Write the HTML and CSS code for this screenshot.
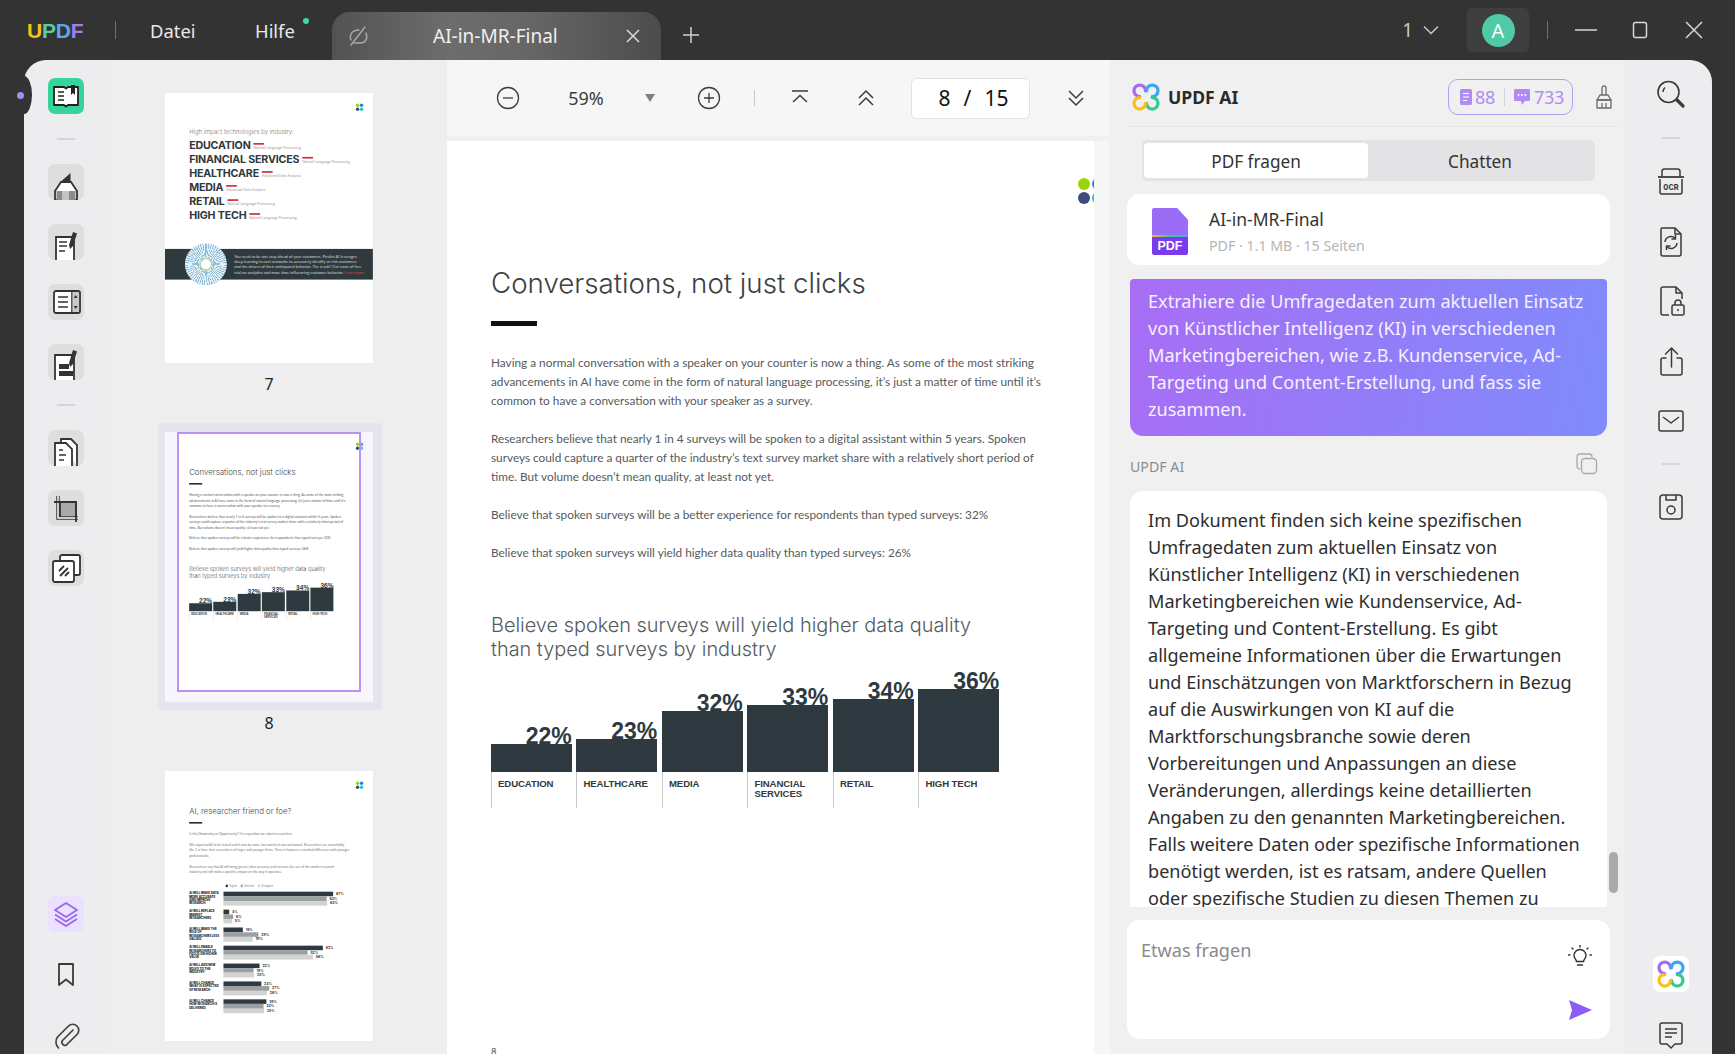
FILE: index.html
```html
<!DOCTYPE html>
<html lang="de">
<head>
<meta charset="utf-8">
<title>UPDF</title>
<link rel="stylesheet" href="styles.css">
</head>
<body>
<svg class="defs" width="0" height="0" aria-hidden="true">
  <symbol id="clover" viewBox="0 0 24 24">
    <g fill="none" stroke-width="2.6" stroke-linecap="round">
      <path stroke="#a66bf0" d="M11.6 7A4.6 4.6 0 1 0 7 11.6"/>
      <path stroke="#3aa6f5" d="M12.4 7A4.6 4.6 0 1 1 17 11.6"/>
      <path stroke="#35c98f" d="M17 12.4A4.6 4.6 0 1 1 12.4 17"/>
      <path stroke="#f9bf1a" d="M7 12.4A4.6 4.6 0 1 0 11.6 17"/>
    </g>
  </symbol>
</svg>
<div class="app">
  <header class="titlebar">
    <div class="brand"><span class="c-u">U</span><span class="c-p">P</span><span class="c-d">D</span><span class="c-f">F</span></div>
    <span class="tsep"></span>
    <span class="menu menu-datei">Datei</span>
    <span class="menu menu-hilfe">Hilfe<i class="hilfe-dot"></i></span>
    <div class="tab">
      <svg class="tab-ic" viewBox="0 0 24 24" fill="none" stroke="#a8a8a8" stroke-width="1.5" stroke-linecap="round"><path d="M5 21 19 3"/><path d="M5 16c-2-5 1-10 8-10"/><path d="M20 9c2 5 0 10-6 10H8"/></svg>
      <span class="tab-title">AI-in-MR-Final</span>
      <svg class="tab-x" viewBox="0 0 14 14" stroke="#dcdcdc" stroke-width="1.5"><path d="M1 1l12 12M13 1 1 13"/></svg>
    </div>
    <svg class="tab-plus" viewBox="0 0 18 18" stroke="#cfcfcf" stroke-width="1.5"><path d="M9 1v16M1 9h16"/></svg>
    <div class="tright">
      <span class="tcount">1</span>
      <svg class="tchev" viewBox="0 0 16 10" fill="none" stroke="#c8c8c8" stroke-width="1.5"><path d="M1 1.500 8 8.500 15 1.500"/></svg>
      <div class="avatar-box"><span class="avatar">A</span></div>
      <span class="tsep2"></span>
      <span class="winbtn"><svg viewBox="0 0 22 22" stroke="#d8d8d8" stroke-width="1.5"><path d="M0 11h22"/></svg></span>
      <span class="winbtn"><svg viewBox="0 0 22 22" fill="none" stroke="#d8d8d8" stroke-width="1.5"><rect x="4.500" y="3.500" width="13" height="15" rx="2"/></svg></span>
      <span class="winbtn"><svg viewBox="0 0 22 22" stroke="#d8d8d8" stroke-width="1.5"><path d="M3 3l16 16M19 3 3 19"/></svg></span>
    </div>
  </header>

  <main class="main">
    <div class="notch"><i class="notch-dot"></i></div>

    <nav class="rail rail-left">
      <span class="tile tile-on">
        <svg viewBox="0 0 36 36"><path d="M6 9h10l2 1.500L20 9h10v18H20l-2 1.500L16 27H6z" fill="#fff" stroke="#222" stroke-width="1.800" stroke-linejoin="round"/><path d="M10 14h6M10 18h6M10 22h6" stroke="#222" stroke-width="1.600"/><path d="M23 7h4v10l-2-2-2 2z" fill="#222"/></svg>
      </span>
      <span class="dash"></span>
      <span class="tile">
        <svg viewBox="0 0 36 36"><path d="M13.500 17 22.500 9v8z" fill="#333"/><path d="M13 18h10l6 9v9H7v-9z" fill="#fff" stroke="#333" stroke-width="1.800"/><rect x="8.500" y="27" width="19" height="9" fill="#8b8b8b"/><rect x="14" y="27" width="7" height="9" fill="#c4c4c4"/></svg>
      </span>
      <span class="tile">
        <svg viewBox="0 0 36 36"><path d="M8 36V13h18v23" fill="#fff" stroke="#333" stroke-width="1.800"/><path d="M11 18h8M11 22h8M11 27h6" stroke="#333" stroke-width="1.600"/><path d="M25 8l4 1.500-4 12.500-3 3-1-4z" fill="#333"/></svg>
      </span>
      <span class="tile">
        <svg viewBox="0 0 36 36"><rect x="6" y="7" width="26" height="22" rx="2" fill="#fff" stroke="#333" stroke-width="1.800"/><path d="M24 7v22" stroke="#333" stroke-width="1.600"/><rect x="24.500" y="8" width="6.500" height="20" fill="#c9c9c9"/><path d="M10 13h10M10 18h10M10 23h10" stroke="#333" stroke-width="1.700"/><path d="M27.700 11l-2 3h4zM27.700 25l-2-3h4z" fill="#333"/></svg>
      </span>
      <span class="tile">
        <svg viewBox="0 0 36 36"><path d="M7 36V11h19v25" fill="#fff" stroke="#333" stroke-width="1.800"/><rect x="11" y="20" width="10" height="5" fill="#333"/><rect x="11" y="27" width="14" height="5" fill="#333"/><path d="M25 6l4 1.500-4 12.500-3 3-1-4z" fill="#333"/></svg>
      </span>
      <span class="dash"></span>
      <span class="tile">
        <svg viewBox="0 0 36 36"><path d="M13 12V9h10l6 6v21" fill="#fff" stroke="#333" stroke-width="1.800"/><path d="M7 36V13h11l6 6v17" fill="#fff" stroke="#333" stroke-width="1.800"/><path d="M11 20h4M11 25h7M11 30h5" stroke="#333" stroke-width="1.600"/></svg>
      </span>
      <span class="tile">
        <svg viewBox="0 0 36 36" fill="none" stroke="#333" stroke-width="1.800"><rect x="12" y="12" width="16" height="16" fill="#a9a9a9"/><path d="M10 6v22h20" stroke-width="3.500" stroke="#333"/><path d="M10 6v22h20" stroke-width="1.500" stroke="#fff"/><path d="M6 12h22v20" /></svg>
      </span>
      <span class="tile">
        <svg viewBox="0 0 36 36"><rect x="12" y="5" width="20" height="20" rx="2" fill="#fff" stroke="#333" stroke-width="1.800"/><rect x="5" y="11" width="21" height="21" rx="2" fill="#fff" stroke="#333" stroke-width="1.800"/><path d="M11 21l5-5M12 26l8-8M17 26l4-4" stroke="#333" stroke-width="1.800"/></svg>
      </span>
      <span class="rail-spacer"></span>
      <span class="tile tile-lilac">
        <svg viewBox="0 0 36 36" fill="none" stroke="#9a68ec" stroke-width="1.800" stroke-linejoin="round"><path d="M18 7l11 7-11 7-11-7z"/><path d="M7 18.500l11 7 11-7M7 23l11 7 11-7"/></svg>
      </span>
      <span class="tile tile-plain">
        <svg viewBox="0 0 36 36" fill="none" stroke="#3a3a3a" stroke-width="1.800" stroke-linejoin="round"><path d="M11 8h14v21l-7-5.500L11 29z"/></svg>
      </span>
      <span class="tile tile-plain">
        <svg viewBox="0 0 36 36" fill="none" stroke="#444" stroke-width="1.700" stroke-linecap="round"><path d="M25 14 14.500 24.500a3 3 0 0 0 4.200 4.200L29 18.500a6 6 0 0 0-8.500-8.500L9.500 21a8.500 8.500 0 0 0 1 11"/></svg>
      </span>
    </nav>

    <aside class="thumbs">
      <div class="thumb">
        <div class="thumb-page">
          <article class="doc doc-mini">
            <div class="doc-logo"><i class="d1"></i><i class="d2"></i><i class="d3"></i><i class="d4"></i></div>
            <p class="lead">High impact technologies by industry:</p>
            <div class="ind"><b>EDUCATION</b><span class="tag"><i></i>Natural Language Processing</span></div>
            <div class="ind"><b>FINANCIAL SERVICES</b><span class="tag"><i></i>Natural Language Processing</span></div>
            <div class="ind"><b>HEALTHCARE</b><span class="tag"><i></i>Advanced Data Analysis</span></div>
            <div class="ind"><b>MEDIA</b><span class="tag"><i></i>Advanced Data Analysis</span></div>
            <div class="ind"><b>RETAIL</b><span class="tag"><i></i>Natural Language Processing</span></div>
            <div class="ind"><b>HIGH TECH</b><span class="tag"><i></i>Natural Language Processing</span></div>
            <div class="band">
              <span class="burst"></span>
              <p>You need to be one step ahead of your customers. Predict AI leverages<br>deep learning/neural networks to accurately identify at-risk customers<br>and the drivers of their anticipated behavior. The result? Cut costs of free<br>trial on analytics and more time influencing customer behavior. <em>Learn more</em></p>
            </div>
          </article>
        </div>
        <div class="thumb-no">7</div>
      </div>

      <div class="thumb thumb-sel">
        <div class="thumb-page">
          <article class="doc doc-mini">
            <div class="doc-logo"><i class="d1"></i><i class="d2"></i><i class="d3"></i><i class="d4"></i></div>
            <h1 class="doc-title">Conversations, not just clicks</h1>
            <div class="doc-bar"></div>
            <p class="doc-p">Having a normal conversation with a speaker on your counter is now a thing. As some of the most striking<br>advancements in AI have come in the form of natural language processing, it’s just a matter of time until it’s<br>common to have a conversation with your speaker as a survey.</p>
            <p class="doc-p">Researchers believe that nearly 1 in 4 surveys will be spoken to a digital assistant within 5 years. Spoken<br>surveys could capture a quarter of the industry’s text survey market share with a relatively short period of<br>time. But volume doesn’t mean quality, at least not yet.</p>
            <p class="doc-p">Believe that spoken surveys will be a better experience for respondents than typed surveys: 32%</p>
            <p class="doc-p">Believe that spoken surveys will yield higher data quality than typed surveys: 26%</p>
            <h2 class="doc-h2">Believe spoken surveys will yield higher data quality<br>than typed surveys by industry</h2>
            <div class="cols">
              <div class="col"><span class="pct">22%</span><span class="colbar" style="height:28px"></span><span class="collab">EDUCATION</span></div>
              <div class="col"><span class="pct">23%</span><span class="colbar" style="height:33px"></span><span class="collab">HEALTHCARE</span></div>
              <div class="col"><span class="pct">32%</span><span class="colbar" style="height:61px"></span><span class="collab">MEDIA</span></div>
              <div class="col"><span class="pct">33%</span><span class="colbar" style="height:67px"></span><span class="collab">FINANCIAL<br>SERVICES</span></div>
              <div class="col"><span class="pct">34%</span><span class="colbar" style="height:73px"></span><span class="collab">RETAIL</span></div>
              <div class="col"><span class="pct">36%</span><span class="colbar" style="height:83px"></span><span class="collab">HIGH TECH</span></div>
            </div>
          </article>
          <div class="sel-frame"></div>
        </div>
        <div class="thumb-no">8</div>
      </div>

      <div class="thumb">
        <div class="thumb-page">
          <article class="doc doc-mini">
            <div class="doc-logo"><i class="d1"></i><i class="d2"></i><i class="d3"></i><i class="d4"></i></div>
            <h1 class="doc-title">AI, researcher friend or foe?</h1>
            <div class="doc-bar"></div>
            <p class="doc-p doc-p-soft">Is this Doomsday or Opportunity? It’s a question we asked researchers.</p>
            <p class="doc-p doc-p-soft">We expected AI to be feared and it was by some, but mostly it was welcomed. Researchers are remarkably<br>like 1 in four, that researchers of larger and younger firms. There is however a marked difference with younger<br>professionals.</p>
            <p class="doc-p doc-p-soft">Researchers say that AI will bring greater data accuracy and increase the use of the market research<br>industry and will make a positive impact on the way it operates.</p>
            <div class="hchart">
              <div class="legend"><i class="k1"></i>Agree <i class="k2"></i>Neutral <i class="k3"></i>Disagree</div>
              <div class="hrow"><span class="hlab">AI WILL MAKE DATA MORE ACCURATE AND IMPROVE RESEARCH</span><div class="hbars"><div class="hb k1" style="width:386px"><u>67%</u></div><div class="hb k2" style="width:363px"><u>63%</u></div><div class="hb k3" style="width:365px"><u>63%</u></div></div></div>
              <div class="hrow"><span class="hlab">AI WILL REPLACE MARKET RESEARCHERS</span><div class="hbars"><div class="hb k1" style="width:20px"><u>4%</u></div><div class="hb k2" style="width:34px"><u>6%</u></div><div class="hb k3" style="width:30px"><u>5%</u></div></div></div>
              <div class="hrow hrow-l"><span class="hlab">AI WILL MAKE THE ROLE OF RESEARCHERS LESS VALUED</span><div class="hbars"><div class="hb k1" style="width:68px"><u>16%</u></div><div class="hb k2" style="width:123px"><u>28%</u></div><div class="hb k3" style="width:103px"><u>19%</u></div></div></div>
              <div class="hrow"><span class="hlab">AI WILL ENABLE RESEARCHERS TO FOCUS ON HIGHER VALUE</span><div class="hbars"><div class="hb k1" style="width:350px"><u>62%</u></div><div class="hb k2" style="width:296px"><u>52%</u></div><div class="hb k3" style="width:315px"><u>56%</u></div></div></div>
              <div class="hrow hrow-l"><span class="hlab">AI WILL ADD NEW ROLES TO THE INDUSTRY</span><div class="hbars"><div class="hb k1" style="width:127px"><u>22%</u></div><div class="hb k2" style="width:106px"><u>18%</u></div><div class="hb k3" style="width:108px"><u>20%</u></div></div></div>
              <div class="hrow"><span class="hlab">AI WILL CHANGE WHAT IS EXPECTED OF RESEARCH</span><div class="hbars"><div class="hb k1" style="width:133px"><u>24%</u></div><div class="hb k2" style="width:161px"><u>27%</u></div><div class="hb k3" style="width:153px"><u>26%</u></div></div></div>
              <div class="hrow"><span class="hlab">AI WILL CHANGE HOW RESEARCH IS DELIVERED</span><div class="hbars"><div class="hb k1" style="width:151px"><u>28%</u></div><div class="hb k2" style="width:141px"><u>24%</u></div><div class="hb k3" style="width:143px"><u>25%</u></div></div></div>
            </div>
          </article>
        </div>
      </div>
    </aside>

    <section class="viewer">
      <div class="toolbar">
        <svg class="tb-ic" viewBox="0 0 24 24" fill="none" stroke="#3c3c3c" stroke-width="1.300"><circle cx="12" cy="12" r="10.500"/><path d="M7 12h10"/></svg>
        <span class="zoom-val">59%</span>
        <svg class="tb-tri" viewBox="0 0 10 8" fill="#808080"><path d="M0 0h10L5 8z"/></svg>
        <svg class="tb-ic" viewBox="0 0 24 24" fill="none" stroke="#3c3c3c" stroke-width="1.300"><circle cx="12" cy="12" r="10.500"/><path d="M7 12h10M12 7v10"/></svg>
        <span class="tb-sep"></span>
        <svg class="tb-ic-s" viewBox="0 0 20 20" fill="none" stroke="#3c3c3c" stroke-width="1.500"><path d="M2 3h16M3 14l7-6.500 7 6.500"/></svg>
        <svg class="tb-ic-s" viewBox="0 0 20 20" fill="none" stroke="#3c3c3c" stroke-width="1.500"><path d="M3 10l7-7 7 7M3 17l7-7 7 7"/></svg>
        <div class="pagebox"><span>8</span><span>/</span><span>15</span></div>
        <svg class="tb-ic-s" viewBox="0 0 20 20" fill="none" stroke="#3c3c3c" stroke-width="1.500"><path d="M3 3l7 7 7-7M3 10l7 7 7-7"/></svg>
      </div>
      <div class="page-area">
        <div class="page-clip">
          <article class="doc">
            <div class="doc-logo"><i class="d1"></i><i class="d2"></i><i class="d3"></i><i class="d4"></i></div>
            <h1 class="doc-title">Conversations, not just clicks</h1>
            <div class="doc-bar"></div>
            <p class="doc-p">Having a normal conversation with a speaker on your counter is now a thing. As some of the most striking<br>advancements in AI have come in the form of natural language processing, it’s just a matter of time until it’s<br>common to have a conversation with your speaker as a survey.</p>
            <p class="doc-p">Researchers believe that nearly 1 in 4 surveys will be spoken to a digital assistant within 5 years. Spoken<br>surveys could capture a quarter of the industry’s text survey market share with a relatively short period of<br>time. But volume doesn’t mean quality, at least not yet.</p>
            <p class="doc-p">Believe that spoken surveys will be a better experience for respondents than typed surveys: 32%</p>
            <p class="doc-p">Believe that spoken surveys will yield higher data quality than typed surveys: 26%</p>
            <h2 class="doc-h2">Believe spoken surveys will yield higher data quality<br>than typed surveys by industry</h2>
            <div class="cols">
              <div class="col"><span class="pct">22%</span><span class="colbar" style="height:28px"></span><span class="collab">EDUCATION</span></div>
              <div class="col"><span class="pct">23%</span><span class="colbar" style="height:33px"></span><span class="collab">HEALTHCARE</span></div>
              <div class="col"><span class="pct">32%</span><span class="colbar" style="height:61px"></span><span class="collab">MEDIA</span></div>
              <div class="col"><span class="pct">33%</span><span class="colbar" style="height:67px"></span><span class="collab">FINANCIAL<br>SERVICES</span></div>
              <div class="col"><span class="pct">34%</span><span class="colbar" style="height:73px"></span><span class="collab">RETAIL</span></div>
              <div class="col"><span class="pct">36%</span><span class="colbar" style="height:83px"></span><span class="collab">HIGH TECH</span></div>
            </div>
            <div class="doc-no">8</div>
          </article>
        </div>
      </div>
    </section>

    <section class="ai">
      <div class="ai-head">
        <svg class="ai-logo"><use href="#clover"/></svg>
        <strong class="ai-name">UPDF AI</strong>
        <div class="quota">
          <svg class="q-ic" viewBox="0 0 12 16"><path d="M1.500 0h9A1.500 1.500 0 0 1 12 1.500v13a1.500 1.500 0 0 1-1.500 1.500h-9A1.500 1.500 0 0 1 0 14.500v-13A1.500 1.500 0 0 1 1.500 0z" fill="#b18cf3"/><path d="M3 4.500h6M3 8h6M3 11.500h4" stroke="#fff" stroke-width="1.200"/></svg>
          <span>88</span>
          <i class="q-sep"></i>
          <svg class="q-ic2" viewBox="0 0 16 16"><path d="M1 0h14a1 1 0 0 1 1 1v10a1 1 0 0 1-1 1h-4l-3 4-1-4H1a1 1 0 0 1-1-1V1a1 1 0 0 1 1-1z" fill="#b18cf3"/><circle cx="4.500" cy="6" r="1" fill="#fff"/><circle cx="8" cy="6" r="1" fill="#fff"/><circle cx="11.500" cy="6" r="1" fill="#fff"/></svg>
          <span>733</span>
        </div>
        <svg class="broom" viewBox="0 0 18 24" fill="none" stroke="#6c6c6c" stroke-width="1.300" stroke-linejoin="round"><path d="M7 10V3a2 2 0 0 1 4 0v7"/><path d="M5 10h8l3 5H2z"/><path d="M2 15h14v8H2zM7 18v5M11 18v5"/></svg>
      </div>
      <div class="ai-tabs">
        <span class="ai-tab ai-tab-on">PDF fragen</span>
        <span class="ai-tab">Chatten</span>
      </div>
      <div class="file-card">
        <div class="file-ic"><span class="file-top"></span><span class="file-strip"></span><span class="file-bot">PDF</span></div>
        <div class="file-meta">
          <div class="file-name">AI-in-MR-Final</div>
          <div class="file-sub">PDF · 1.1 MB · 15 Seiten</div>
        </div>
      </div>
      <div class="chat">
        <div class="bubble">Extrahiere die Umfragedaten zum aktuellen Einsatz<br>von Künstlicher Intelligenz (KI) in verschiedenen<br>Marketingbereichen, wie z.B. Kundenservice, Ad-<br>Targeting und Content-Erstellung, und fass sie<br>zusammen.</div>
        <div class="ans-head">
          <span>UPDF AI</span>
          <svg class="copy" viewBox="0 0 22 22" fill="none" stroke="#a8a8a8" stroke-width="1.300"><rect x="5.500" y="5.500" width="15" height="15" rx="3.500"/><path d="M4 16a3 3 0 0 1-3-3V4a3 3 0 0 1 3-3h9a3 3 0 0 1 3 3"/></svg>
        </div>
        <div class="answer">Im Dokument finden sich keine spezifischen<br>Umfragedaten zum aktuellen Einsatz von<br>Künstlicher Intelligenz (KI) in verschiedenen<br>Marketingbereichen wie Kundenservice, Ad-<br>Targeting und Content-Erstellung. Es gibt<br>allgemeine Informationen über die Erwartungen<br>und Einschätzungen von Marktforschern in Bezug<br>auf die Auswirkungen von KI auf die<br>Marktforschungsbranche sowie deren<br>Vorbereitungen und Anpassungen an diese<br>Veränderungen, allerdings keine detaillierten<br>Angaben zu den genannten Marketingbereichen.<br>Falls weitere Daten oder spezifische Informationen<br>benötigt werden, ist es ratsam, andere Quellen<br>oder spezifische Studien zu diesen Themen zu</div>
        <span class="scroll-thumb"></span>
      </div>
      <div class="ask">
        <div class="ask-top">
          <span class="ask-ph">Etwas fragen</span>
          <svg class="bulb" viewBox="0 0 24 24" fill="none" stroke="#333" stroke-width="1.400" stroke-linecap="round"><path d="M8.500 16.500c0-2-2.500-3-2.500-6a6 6 0 0 1 12 0c0 3-2.500 4-2.500 6z"/><path d="M9.500 20h5M12 0.500v1.500M2 10H.5M23.500 10H22M4 3l1 1M20 3l-1 1"/></svg>
        </div>
        <svg class="send" viewBox="0 0 24 20" fill="#8b5cf6"><path d="M1 0l23 10L1 20l3-10z"/></svg>
      </div>
    </section>

    <nav class="rail rail-right">
      <svg class="rico" viewBox="0 0 36 36" fill="none" stroke="#3a3a3a" stroke-width="1.600"><circle cx="15.500" cy="15" r="10.500"/><path d="M10 15a6 6 0 0 1 2-4.500"/><path d="M24 23l6 6" stroke-width="3.200" stroke-linecap="round"/></svg>
      <span class="dash"></span>
      <svg class="rico" viewBox="0 0 36 36" fill="none" stroke="#3a3a3a" stroke-width="1.500"><path d="M9 13V8.500A2.500 2.500 0 0 1 11.500 6h13A2.500 2.500 0 0 1 27 8.500V13"/><path d="M5 14h26" stroke-width="1.800"/><path d="M7 16v13a2 2 0 0 0 2 2h18a2 2 0 0 0 2-2V16"/><text x="18" y="27" class="ocr-t">OCR</text></svg>
      <svg class="rico" viewBox="0 0 36 36" fill="none" stroke="#3a3a3a" stroke-width="1.500" stroke-linejoin="round"><path d="M9 5h13l6 6v20a2 2 0 0 1-2 2H10a2 2 0 0 1-2-2V6a1 1 0 0 1 1-1z"/><path d="M22 5v6h6"/><path d="M12 19a6 6 0 0 1 10-4M24 20a6 6 0 0 1-10 4"/><path d="M22.500 12v4h-4M13.500 27v-4h4" stroke-width="1.500"/></svg>
      <svg class="rico" viewBox="0 0 36 36" fill="none" stroke="#3a3a3a" stroke-width="1.500" stroke-linejoin="round"><path d="M16 32H10a2 2 0 0 1-2-2V6a2 2 0 0 1 2-2h13l6 6v6"/><path d="M23 4v6h6"/><rect x="19" y="22" width="12" height="10" rx="1.500"/><path d="M22 22v-2a3 3 0 0 1 6 0v2M25 26v2"/></svg>
      <svg class="rico" viewBox="0 0 36 36" fill="none" stroke="#3a3a3a" stroke-width="1.500" stroke-linejoin="round" stroke-linecap="round"><path d="M13 15H10a2 2 0 0 0-2 2v13a2 2 0 0 0 2 2h17a2 2 0 0 0 2-2V17a2 2 0 0 0-2-2h-3"/><path d="M18.500 24V5M12.500 11l6-6 6 6"/></svg>
      <svg class="rico" viewBox="0 0 36 36" fill="none" stroke="#3a3a3a" stroke-width="1.500" stroke-linejoin="round"><rect x="6" y="8" width="24" height="20" rx="2"/><path d="M10 14l8 6 8-6"/></svg>
      <span class="dash"></span>
      <svg class="rico" viewBox="0 0 36 36" fill="none" stroke="#3a3a3a" stroke-width="1.500" stroke-linejoin="round"><path d="M10 6h16a3 3 0 0 1 3 3v18a3 3 0 0 1-3 3H10a3 3 0 0 1-3-3V9a3 3 0 0 1 3-3z"/><path d="M13 6v5h10V6"/><circle cx="18" cy="21" r="4"/></svg>
      <span class="rail-spacer"></span>
      <span class="tile tile-white"><svg class="tile-clover"><use href="#clover"/></svg></span>
      <svg class="rico" viewBox="0 0 36 36" fill="none" stroke="#3a3a3a" stroke-width="1.500" stroke-linejoin="round"><path d="M9 7h18a2 2 0 0 1 2 2v17a2 2 0 0 1-2 2h-5l-4 4-4-4H9a2 2 0 0 1-2-2V9a2 2 0 0 1 2-2z"/><path d="M12 13h12M12 17h12M12 21h7"/></svg>
    </nav>
  </main>
</div>
</body>
</html>
```

FILE: styles.css
```css
* { box-sizing: border-box; }
html, body { margin: 0; padding: 0; height: 100%; }
body { background: #333333; font-family: "Noto Sans", "Liberation Sans", sans-serif; overflow: hidden; color: #333; }
.defs { display: block; height: 0; }
.app { width: 1735px; height: 1054px; display: flex; flex-direction: column; }

/* title bar */
.titlebar { height: 60px; flex: none; display: flex; align-items: center; padding-left: 27px; color: #ececec; }
.brand { width: 56px; font: 700 21px/1 "Liberation Sans", sans-serif; letter-spacing: -.2px; }
.c-u { color: #f7c21c; } .c-p { color: #55cfa0; } .c-d { color: #5aa9ef; } .c-f { color: #a97cf0; }
.tsep { width: 1px; height: 18px; background: #707070; margin-left: 32px; margin-right: 34px; }
.menu { font-size: 18.400px; color: #e8e8e8; position: relative; }
.menu-datei { width: 105px; }
.menu-hilfe { width: 77px; }
.hilfe-dot { position: absolute; left: 48px; top: 0; width: 6px; height: 6px; border-radius: 50%; background: #3fd6a2; }
.tab { align-self: flex-end; width: 329px; height: 48px; display: flex; align-items: center; border-radius: 18px 18px 0 0; background: linear-gradient(90deg, #525252, #6d6d6d 35%, #666 60%, #4c4c4c); }
.tab-ic { width: 24px; height: 24px; margin-left: 14px; flex: none; }
.tab-title { margin-left: 63px; width: 200px; font-size: 19px; color: #f0f0f0; }
.tab-x { width: 14px; height: 14px; margin-left: -7px; }
.tab-plus { width: 18px; height: 18px; margin: 10px 0 0 21px; }
.tright { margin-left: auto; display: flex; align-items: center; margin-right: 14px; }
.tcount { font-size: 19px; color: #c8c8c8; margin-right: 10px; }
.tchev { width: 16px; height: 10px; margin-right: 28px; }
.avatar-box { width: 62px; height: 44px; background: #3e3e3e; border-radius: 5px; display: flex; align-items: center; justify-content: center; margin-right: 18px; }
.avatar { width: 33px; height: 33px; border-radius: 50%; background: #4fc9a6; color: #fff; font-size: 20px; line-height: 33px; text-align: center; }
.tsep2 { width: 1px; height: 18px; background: #707070; margin-right: 11px; }
.winbtn { width: 54px; display: flex; justify-content: center; }
.winbtn svg { width: 22px; height: 22px; }

/* main shell */
.main { flex: 1; min-height: 0; margin: 0 23px 0 24px; display: flex; position: relative; background: #ededef; border-radius: 22px 22px 0 0; }
.notch { position: absolute; left: -8px; top: 16px; width: 16px; height: 38px; border-radius: 50%; background: #333; }
.notch-dot { position: absolute; left: 1px; top: 16px; width: 7px; height: 7px; border-radius: 50%; background: #a98af0; }

/* rails */
.rail { flex: none; display: flex; flex-direction: column; align-items: center; gap: 24px; padding: 18px 0 2px; }
.rail-left { width: 83px; }
.rail-right { width: 87px; padding-top: 17px; padding-left: 4px; }
.rail-spacer { flex: 1; }
.tile { width: 36px; height: 36px; flex: none; border-radius: 7px; background: #dededf; overflow: hidden; display: block; }
.tile svg { display: block; width: 36px; height: 36px; }
.tile-on { background: #35d49a; }
.tile-lilac { background: #ebe0fd; }
.tile-plain { background: transparent; }
.tile-white { background: #fff; padding: 3px; }
.tile .tile-clover { width: 30px; height: 30px; }
.dash { width: 18px; height: 2px; flex: none; background: #d5d5d7; }
.rico { width: 36px; height: 36px; flex: none; }
.ocr-t { font: 700 8.500px "Liberation Mono", monospace; text-anchor: middle; fill: #3a3a3a; stroke: none; }

/* thumbnails */
.thumbs { width: 340px; flex: none; overflow: hidden; padding: 33px 0 0 58px; background: #eeeeef; }
.thumb { width: 208px; height: 339px; flex: none; }
.thumb-page { width: 208px; height: 270px; background: #fff; position: relative; overflow: hidden; }
.thumb-no { margin-top: 10px; text-align: center; font-size: 16px; line-height: 22px; color: #222; }
.thumb-sel .thumb-page { overflow: hidden; background: #f5f1fd; }
.thumb-sel { position: relative; }
.thumb-sel::before { content: ""; position: absolute; left: -7px; top: -9px; width: 224px; height: 287px; background: #e6e4ef; border-radius: 3px; }
.sel-frame { position: absolute; left: 12px; top: 0; width: 184px; height: 260px; border: 2px solid #b794f4; box-shadow: 0 0 0 40px rgba(232, 222, 250, .3); }

/* document */
.doc { width: 732px; height: 950px; background: #fff; padding: 37px 0 0 85px; font-family: "Inter", "Liberation Sans", sans-serif; color: #4a4f52; position: relative; flex: none; }
.doc-mini { transform: scale(.284); transform-origin: 0 0; }
.doc-logo { margin-left: 587px; width: 26px; display: grid; grid-template-columns: 12px 12px; gap: 2px; height: 26px; }
.doc-logo i { width: 12px; height: 12px; border-radius: 50%; display: block; }
.d1 { background: #9bd40f; } .d2 { background: #1c88d8; } .d3 { background: #3f4a7e; } .d4 { background: #25c3cf; }
.doc-title { margin: 59px 0 18px; font-size: 27.700px; line-height: 40px; font-weight: 300; color: #3c4144; }
.doc-bar { width: 46px; height: 5px; background: #111; margin-bottom: 27px; }
.doc-p { margin: 0 0 19px; font-family: "Lato", "Liberation Sans", sans-serif; font-size: 11.800px; line-height: 19px; color: #555a5d; white-space: nowrap; }
.doc-p-soft { color: #777; }
.doc-h2 { margin: 51px 0 6px; font-size: 19.900px; line-height: 24px; font-weight: 300; color: #555a5d; white-space: nowrap; }
.cols { display: flex; gap: 4.700px; align-items: flex-end; height: 141px; }
.col { width: 80.800px; display: flex; flex-direction: column; align-items: flex-end; }
.pct { font: 700 23px/24px "Liberation Sans", sans-serif; color: #2e3a3f; margin-bottom: -4px; }
.colbar { display: block; width: 100%; background: #2e3a3f; position: relative; }
.collab { width: 100%; height: 36px; border-left: 1px solid #c6c8ca; padding: 7px 0 0 6px; font: 700 9.600px/10px "Liberation Sans", sans-serif; letter-spacing: -.1px; color: #333a3e; }
.doc-no { font-size: 9px; color: #555; margin-top: 238px; }

/* thumb 7 */
.lead { margin: 60px 0 5px; font-size: 21px; line-height: 30px; font-weight: 300; color: #777; }
.ind { display: flex; align-items: center; gap: 10px; height: 49.500px; white-space: nowrap; }
.ind b { font-size: 37.500px; font-weight: 700; color: #30383c; letter-spacing: -.6px; }
.tag { display: flex; flex-direction: column; font-size: 12px; color: #999; padding-top: 10px; }
.tag i { width: 38px; height: 6px; background: #d32f3d; margin-bottom: 3px; }
.band { margin: 94px 0 0 -85px; height: 108px; width: 732px; background: #2f3a3f; display: flex; align-items: center; padding-left: 70px; }
.burst { width: 148px; height: 148px; flex: none; border-radius: 50%; background: radial-gradient(circle, #fff 0 16%, #b8d8b0 17%, transparent 28%), repeating-conic-gradient(#8fc0dc 0 3deg, #e6f0f6 3deg 7deg); }
.band p { margin: 0 0 0 26px; font-family: "Lato", "Liberation Sans", sans-serif; font-size: 14px; line-height: 18.500px; color: #d4d8da; white-space: nowrap; }
.band em { font-style: normal; color: #e23a48; }

/* thumb 9 */
.hchart { margin-top: 31px; }
.legend { margin-left: 120px; height: 18px; font-size: 10px; color: #888; display: flex; align-items: center; gap: 4px; margin-bottom: 12px; }
.legend i { width: 9px; height: 9px; border-radius: 50%; margin-left: 8px; }
.hrow { display: flex; margin-bottom: 14px; }
.hrow-l { margin-top: 14px; }
.hlab { width: 120px; padding-right: 12px; flex: none; font-size: 10.500px; line-height: 12px; font-weight: 800; color: #222; }
.hbars { border-left: 1px solid #ddd; }
.hb { height: 16.400px; position: relative; }
.hb u { position: absolute; left: 100%; margin-left: 10px; top: 0; text-decoration: none; font-size: 12px; line-height: 16px; font-weight: 700; color: #333; }
.k1 { background: #2e3a3f; } .k2 { background: #9aa0a2; } .k3 { background: #d2d4d4; }

/* viewer */
.viewer { width: 663px; flex: none; display: flex; flex-direction: column; background: #f6f6f7; min-height: 0; }
.toolbar { height: 81px; flex: none; display: grid; grid-template-columns: 60px 96px 32px 86px 4px 88px 44px 154px 68px; align-items: center; justify-items: center; padding: 0 0 0 31px; border-bottom: 5px solid #f0f0f1; }
.tb-ic { width: 24px; height: 24px; }
.tb-ic-s { width: 20px; height: 20px; }
.tb-tri { width: 10px; height: 8px; }
.zoom-val { font-size: 18px; color: #3c3c3c; }
.tb-sep { width: 1px; height: 16px; background: #c8c8ca; }
.pagebox { justify-self: start; margin-left: 23px; width: 119px; height: 41px; background: #fff; border: 1px solid #e2e2e4; border-radius: 5px; display: flex; align-items: center; justify-content: center; gap: 13px; font-size: 21px; color: #111; padding-left: 6px; }
.page-area { flex: 1; min-height: 0; overflow: hidden; }
.page-clip { width: 647px; height: 100%; overflow: hidden; background: #fff; }
.page-clip .doc { margin-left: -41px; height: 925px; }

/* AI panel */
.ai { width: 515px; flex: none; display: flex; flex-direction: column; min-height: 0; background: #f0f0f1; }
.ai-head { height: 67px; flex: none; margin: 0 5px 0 18px; display: flex; align-items: center; border-bottom: 1px solid #e7e7e8; padding-top: 7px; }
.ai-logo { width: 30px; height: 30px; margin-left: 3px; flex: none; }
.ai-name { margin-left: 7px; width: 280px; font-size: 17.600px; color: #2a2a2a; }
.quota { width: 125px; height: 36px; border: 1.500px solid #b99df2; border-radius: 10px; display: flex; align-items: center; padding-left: 11px; color: #b18cf3; font-size: 18px; letter-spacing: -.3px; }
.q-ic { width: 12px; height: 16px; margin-right: 3px; }
.q-ic2 { width: 16px; height: 16px; margin-right: 4px; }
.q-sep { width: 1px; height: 18px; background: #d5d0e6; margin: 0 9px; }
.broom { width: 18px; height: 24px; margin-left: 22px; }
.ai-tabs { margin: 13px 0 0 32px; width: 453px; height: 41px; background: #e3e3e5; border-radius: 5px; padding: 3px 2px; display: flex; flex: none; }
.ai-tab { width: 224px; height: 35px; line-height: 37px; text-align: center; font-size: 17.200px; color: #333; border-radius: 4px; }
.ai-tab-on { background: #fff; }
.file-card { margin: 13px 0 0 17px; width: 483px; height: 71px; flex: none; background: #fff; border-radius: 13px; display: flex; align-items: center; padding: 4px 0 0 25px; }
.file-ic { width: 36px; height: 47px; flex: none; border-radius: 2px; overflow: hidden; display: flex; flex-direction: column; clip-path: polygon(0 0, 70% 0, 100% 25%, 100% 100%, 0 100%); }
.file-top { height: 27px; background: #9b6cf6; }
.file-strip { height: 2px; background: linear-gradient(90deg, #f7b733, #36c9a0, #4aa3ef); }
.file-bot { flex: 1; background: #7c3aed; color: #fff; font: 700 12.500px/18px "Liberation Sans", sans-serif; text-align: center; }
.file-meta { margin-left: 21px; }
.file-name { font-size: 17.500px; line-height: 25px; color: #333; }
.file-sub { font-size: 14.200px; line-height: 22px; color: #b5b5b5; margin-top: 3px; }
.chat { margin-top: 14px; flex: 1; min-height: 0; overflow: hidden; position: relative; padding-left: 20px; }
.bubble { width: 477px; height: 157px; padding: 9px 0 0 18px; background: linear-gradient(100deg, #a86df5, #7f8bfb); border-radius: 4px 4px 13px 13px; color: #f6f0ff; font-size: 18.100px; line-height: 27px; white-space: nowrap; }
.ans-head { height: 55px; display: flex; align-items: center; justify-content: space-between; width: 468px; color: #8c8c8c; font-size: 14.200px; padding-top: 5px; }
.copy { width: 22px; height: 22px; margin-top: -5px; }
.answer { width: 477px; padding: 16px 0 0 18px; height: 420px; background: #fff; border-radius: 13px 13px 0 0; color: #2e2e2e; font-size: 18.100px; line-height: 27px; white-space: nowrap; }
.scroll-thumb { position: absolute; right: 7px; top: 573px; width: 9px; height: 41px; background: #aaaaaa; border-radius: 5px; }
.ask { margin: 13px 0 15px 17px; width: 483px; height: 119px; flex: none; background: #fff; border-radius: 13px; padding: 18px 18px 0 14px; }
.ask-top { display: flex; justify-content: space-between; align-items: flex-start; }
.ask-ph { font-size: 18.100px; color: #8a8a8a; }
.bulb { width: 24px; height: 24px; margin-top: 7px; flex: none; }
.send { display: block; width: 24px; height: 20px; margin: 31px 0 0 auto; }
```
